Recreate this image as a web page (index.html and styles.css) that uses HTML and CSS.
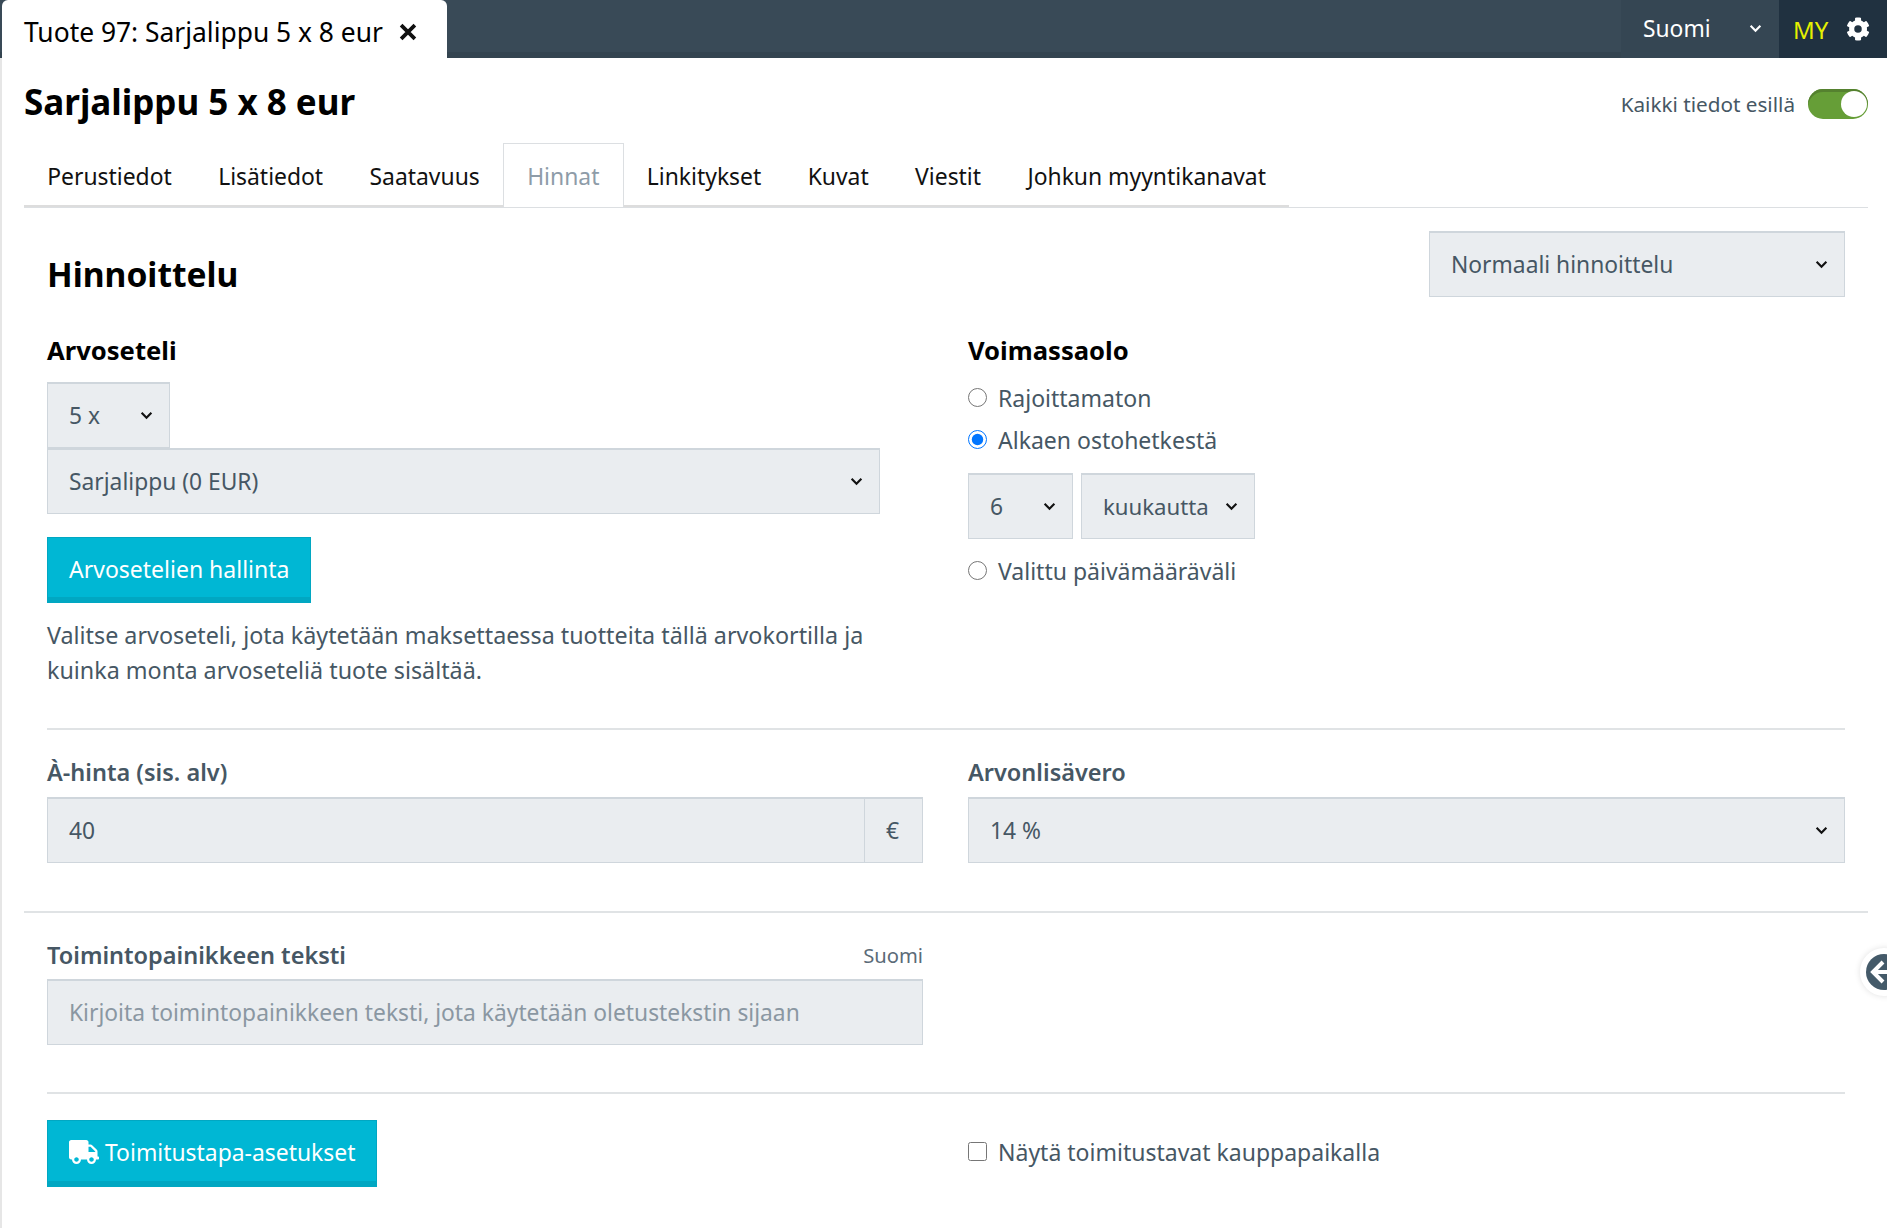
FILE: index.html
```html
<!DOCTYPE html>
<html lang="fi">
<head>
  <meta charset="UTF-8" />
  <title>Tuote 97</title>
  <link rel="stylesheet" href="styles.css">
</head>
<body>

  <header class="topbar">
    <div class="doc-tab">
      <span>Tuote 97: Sarjalippu 5 x 8 eur</span>
      <svg class="doc-close" viewBox="0 0 16 16"><path d="M2.5 2.5l11 11M13.500 2.500l-11 11"/></svg>
    </div>
    <div class="lang">
      <span>Suomi</span>
      <svg class="chev chev-white" viewBox="0 0 12 8"><path d="M1.500 1.500L6 6l4.500-4.500"/></svg>
    </div>
    <div class="account">
      <span class="initials">MY</span>
      <svg class="gear" viewBox="0 0 512 512"><path d="M487 316l-42-25c4-23 4-47 0-70l42-25c5-3 7-8 5-14-11-35-30-67-54-93-4-4-10-5-15-2l-42 24c-18-15-38-27-60-35V28c0-6-4-10-9-12-37-8-74-8-110 0-5 2-9 6-9 12v48c-22 8-42 20-60 35L91 87c-5-3-11-2-15 2-24 26-43 58-54 93-2 6 0 11 5 14l42 25c-4 23-4 47 0 70l-42 25c-5 3-7 8-5 14 11 35 30 67 54 93 4 4 10 5 15 2l42-24c18 15 38 27 60 35v48c0 6 4 10 9 12 37 8 74 8 110 0 5-2 9-6 9-12v-48c22-8 42-20 60-35l42 24c5 3 11 2 15-2 24-26 43-58 54-93 2-6 0-11-5-14zM256 336a80 80 0 1 1 0-160 80 80 0 0 1 0 160z"/></svg>
    </div>
  </header>

  <main class="page">
    <div class="title-row">
      <h1>Sarjalippu 5 x 8 eur</h1>
      <div class="all-info">
        <span>Kaikki tiedot esillä</span>
        <span class="switch"></span>
      </div>
    </div>

    <nav class="tabs">
      <a href="#">Perustiedot</a>
      <a href="#">Lisätiedot</a>
      <a href="#">Saatavuus</a>
      <a href="#" class="active">Hinnat</a>
      <a href="#">Linkitykset</a>
      <a href="#">Kuvat</a>
      <a href="#">Viestit</a>
      <a href="#">Johkun myyntikanavat</a>
    </nav>

    <section class="panel">
      <div class="panel-head">
        <h2>Hinnoittelu</h2>
        <div class="select select-mode">Normaali hinnoittelu<svg class="chev" viewBox="0 0 12 8"><path d="M1.500 1.500L6 6l4.500-4.500"/></svg></div>
      </div>

      <div class="cols">
        <div class="col">
          <h3>Arvoseteli</h3>
          <div class="select select-count">5 x<svg class="chev" viewBox="0 0 12 8"><path d="M1.500 1.500L6 6l4.500-4.500"/></svg></div>
          <div class="select select-voucher">Sarjalippu (0 EUR)<svg class="chev" viewBox="0 0 12 8"><path d="M1.500 1.500L6 6l4.500-4.500"/></svg></div>
          <a href="#" class="btn btn-manage">Arvosetelien hallinta</a>
          <p class="help">Valitse arvoseteli, jota käytetään maksettaessa tuotteita tällä arvokortilla ja kuinka monta arvoseteliä tuote sisältää.</p>
        </div>
        <div class="col">
          <h3>Voimassaolo</h3>
          <div class="valid-list">
            <label class="check"><input type="radio" name="valid">Rajoittamaton</label>
            <label class="check"><input type="radio" name="valid" checked>Alkaen ostohetkestä</label>
            <div class="period">
              <div class="select select-num">6<svg class="chev" viewBox="0 0 12 8"><path d="M1.500 1.500L6 6l4.500-4.500"/></svg></div>
              <div class="select select-unit">kuukautta<svg class="chev" viewBox="0 0 12 8"><path d="M1.500 1.500L6 6l4.500-4.500"/></svg></div>
            </div>
            <label class="check"><input type="radio" name="valid">Valittu päivämääräväli</label>
          </div>
        </div>
      </div>

      <hr class="rule rule-price">

      <div class="cols">
        <div class="col">
          <div class="field-label">À-hinta (sis. alv)</div>
          <div class="input-group">
            <div class="input">40</div>
            <div class="addon">€</div>
          </div>
        </div>
        <div class="col">
          <div class="field-label">Arvonlisävero</div>
          <div class="select">14 %<svg class="chev" viewBox="0 0 12 8"><path d="M1.500 1.500L6 6l4.500-4.500"/></svg></div>
        </div>
      </div>
    </section>

    <hr class="rule rule-full">

    <section class="panel panel-action">
      <div class="cols">
        <div class="col">
          <div class="field-label label-split"><span>Toimintopainikkeen teksti</span><small>Suomi</small></div>
          <div class="input placeholder">Kirjoita toimintopainikkeen teksti, jota käytetään oletustekstin sijaan</div>
        </div>
        <div class="col"></div>
      </div>

      <hr class="rule rule-ship">

      <div class="cols cols-center">
        <div class="col">
          <a href="#" class="btn btn-ship">
            <svg class="truck" viewBox="0 0 640 512"><path d="M624 352h-16V243.900c0-12.700-5.100-24.900-14.100-33.900L494 110.100c-9-9-21.200-14.100-33.900-14.100H416V48c0-26.500-21.500-48-48-48H48C21.500 0 0 21.500 0 48v320c0 26.500 21.500 48 48 48h16c0 53 43 96 96 96s96-43 96-96h128c0 53 43 96 96 96s96-43 96-96h48c8.800 0 16-7.200 16-16v-32c0-8.800-7.200-16-16-16zM160 464c-26.500 0-48-21.500-48-48s21.500-48 48-48 48 21.500 48 48-21.500 48-48 48zm320 0c-26.500 0-48-21.500-48-48s21.500-48 48-48 48 21.500 48 48-21.500 48-48 48zm80-208H416V144h44.100l99.900 99.900V256z"/></svg>
            Toimitustapa-asetukset
          </a>
        </div>
        <div class="col">
          <label class="check check-ship"><input type="checkbox">Näytä toimitustavat kauppapaikalla</label>
        </div>
      </div>
    </section>

    <div class="side-toggle">
      <svg viewBox="0 0 36 36"><circle cx="18" cy="18" r="18"/><path d="M17 8L7 18l10 10M8 18h22"/></svg>
    </div>
  </main>

</body>
</html>
```

FILE: styles.css
```css
* {
  box-sizing: border-box;
}

html, body {
  margin: 0;
  height: 100%;
  overflow: hidden;
}

body {
  font-family: "Noto Sans", sans-serif;
  font-size: 23px;
  color: #465764;
  background-color: #fff;
}

a {
  text-decoration: none;
}

/* Top bar */
.topbar {
  display: flex;
  align-items: stretch;
  height: 58px;
  background-color: #394a57;
  box-shadow: inset 0 -6px 0 #344450;
}

.doc-tab {
  display: flex;
  align-items: center;
  gap: 15px;
  width: 445px;
  margin-left: 2px;
  padding: 5px 0 0 22px;
  background-color: #fff;
  border-radius: 6px 6px 0 0;
  color: #000;
  font-size: 26.400px;
  margin-right: auto;
}

.doc-close {
  width: 20px;
  height: 20px;
  fill: none;
  stroke: #111;
  stroke-width: 3;
}

.lang {
  display: flex;
  align-items: center;
  justify-content: space-between;
  width: 158px;
  padding: 0 17px 2px 22px;
  background-color: #354653;
  color: #fff;
  font-size: 22.800px;
}

.account {
  display: flex;
  align-items: center;
  gap: 18px;
  width: 108px;
  padding-left: 14px;
  background-color: #203140;
}

.initials {
  color: #e5f000;
  font-size: 24px;
}

.gear {
  width: 24px;
  height: 24px;
  fill: #fff;
}

/* Page */
.page {
  position: relative;
  height: 1170px;
  padding: 0 19px 0 22px;
  border-left: 2px solid #e6e6e6;
}

.title-row {
  display: flex;
  align-items: center;
  justify-content: space-between;
  height: 85px;
  padding-top: 2px;
}

h1 {
  margin: 0;
  font-size: 35px;
  font-weight: 700;
  color: #000;
}

.all-info {
  display: flex;
  align-items: center;
  gap: 13px;
  margin-top: 5px;
  font-size: 20.700px;
}

.switch {
  position: relative;
  width: 60px;
  height: 30px;
  border-radius: 15px;
  background-color: #669e37;
  box-shadow: inset 0 3px 0 #55812f;
}

.switch:after {
  content: "";
  position: absolute;
  right: 1px;
  top: 2px;
  width: 26px;
  height: 26px;
  border-radius: 50%;
  background-color: #fff;
}

/* Tabs */
.tabs {
  display: flex;
  height: 65px;
  border-bottom: 1px solid #dcdfe2;
}

.tabs a {
  display: flex;
  align-items: center;
  padding: 2px 23.200px 0;
  color: #111;
  font-size: 22.900px;
  box-shadow: inset 0 -2px 0 #dddddd;
}

.tabs a.active {
  color: #8e9ca8;
  background-color: #fff;
  border: 1px solid #dcdfe2;
  border-bottom: none;
  box-shadow: none;
}

/* Panels */
.panel {
  padding: 0 23px;
}

.panel-head {
  display: flex;
  align-items: center;
  justify-content: space-between;
  padding-top: 23px;
}

h2 {
  margin: 0;
  padding-top: 20px;
  font-size: 33.600px;
  font-weight: 700;
  color: #000;
}

h3 {
  margin: 0 0 12px;
  font-size: 25.600px;
  line-height: 39px;
  font-weight: 700;
  color: #000;
}

.cols {
  display: grid;
  grid-template-columns: 876px 1fr;
  gap: 45px;
}

.cols-center {
  align-items: center;
}

.panel-head + .cols {
  margin-top: 34px;
}

.select, .input, .addon {
  display: flex;
  align-items: center;
  height: 66px;
  padding: 0 21px;
  background-color: #eaedf0;
  border: 2px solid #cfd6dc;
  border-width: 2px 1px 1px;
  color: #465764;
  font-size: 22.800px;
}

.select {
  justify-content: space-between;
  padding-right: 16px;
}

.select-mode {
  width: 416px;
}

.select-count {
  width: 123px;
}

.select-voucher {
  width: 833px;
}

.chev {
  width: 13px;
  height: 9px;
  fill: none;
  stroke: #111;
  stroke-width: 2;
  flex-shrink: 0;
}

.chev-white {
  stroke: #fff;
}

.btn {
  display: inline-flex;
  align-items: center;
  background-color: #00b7d4;
  border: 1px solid #01a7c2;
  border-bottom: 6px solid #01a7c2;
  color: #fff;
  padding: 0 21px;
}

.btn-manage {
  height: 66px;
  margin-top: 23px;
  padding-top: 3px;
}

.help {
  margin: 15px 0 0;
  line-height: 35px;
  font-size: 23.300px;
}

.valid-list {
  margin-top: -5px;
}

.check {
  display: flex;
  align-items: center;
  height: 42px;
}

.check input {
  width: 19px;
  height: 19px;
  margin: 0 11px 2px 0;
}

.check-ship {
  margin-bottom: 3px;
}

.period {
  display: flex;
  gap: 8px;
  margin: 12px 0 11px;
}

.select-num {
  width: 105px;
}

.select-unit {
  width: 174px;
  font-size: 22.200px;
}

.rule {
  margin: 0;
  border: none;
  border-top: 2px solid #e0e3e5;
}

.rule-price {
  margin: 40px 0 20px;
}

.field-label {
  font-weight: 600;
  font-size: 23.500px;
  line-height: 44px;
  margin-bottom: 3px;
}

.input-group {
  display: flex;
}

.input-group .input {
  flex: 1;
}

.addon {
  width: 58px;
  border-left: none;
}

.rule-full {
  margin-top: 48px;
}

.panel-action {
  padding-top: 20px;
}

.label-split {
  display: flex;
  justify-content: space-between;
  margin-bottom: 2px;
}

.label-split small {
  font-weight: 400;
  font-size: 20.200px;
  color: #5b6b78;
}

.placeholder {
  color: #8a97a2;
}

.rule-ship {
  margin: 47px 0 26px;
}

.btn-ship {
  height: 67px;
  gap: 6px;
  padding-top: 2px;
  font-size: 22.900px;
}

.truck {
  width: 30px;
  height: 24px;
  fill: #fff;
}

/* Side handle */
.side-toggle {
  position: absolute;
  right: -21px;
  top: 890px;
  width: 48px;
  height: 48px;
  padding: 6px;
  border-radius: 50%;
  background-color: #fff;
  box-shadow: 0 0 6px rgba(0, 0, 0, 0.12);
}

.side-toggle svg {
  display: block;
  width: 36px;
  height: 36px;
}

.side-toggle circle {
  fill: #445a69;
}

.side-toggle path {
  fill: none;
  stroke: #fff;
  stroke-width: 4;
}
```
